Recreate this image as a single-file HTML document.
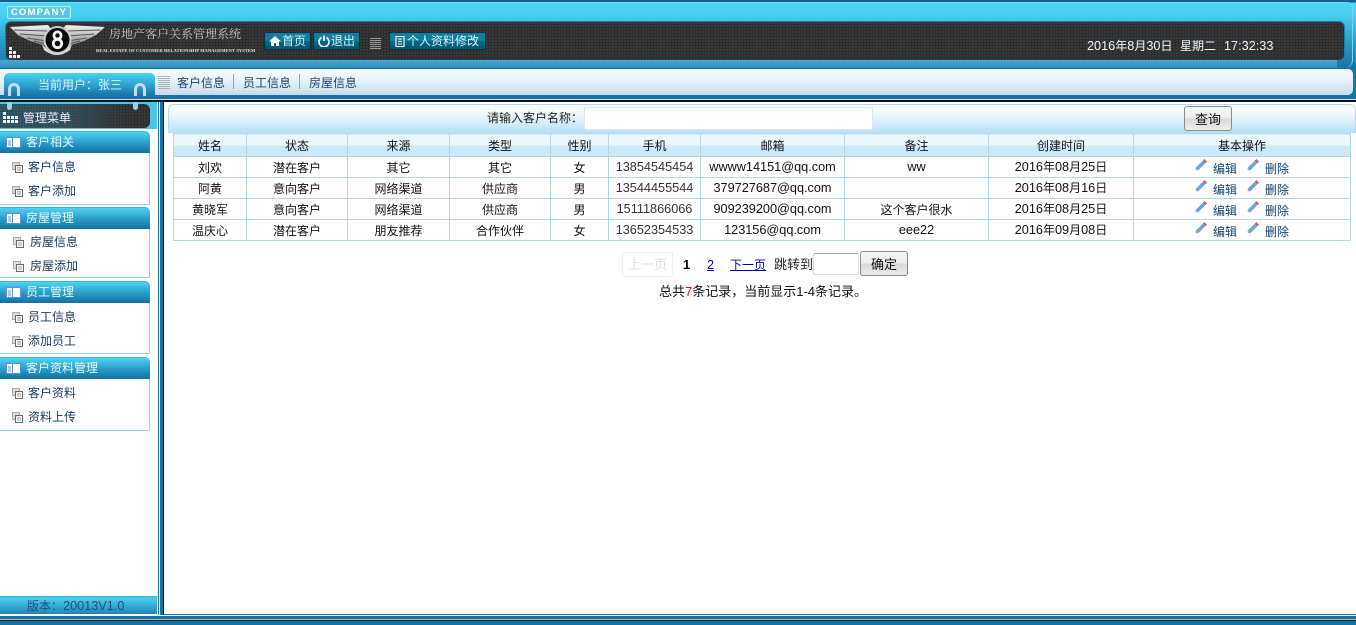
<!DOCTYPE html>
<html lang="zh-CN">
<head>
<meta charset="utf-8">
<title>房地产客户关系管理系统</title>
<style>
*{box-sizing:border-box;margin:0;padding:0}
html,body{width:1356px;height:625px;overflow:hidden;background:#fff}
body{position:relative;font:12px/1.2 "Liberation Sans","Noto Sans CJK SC",sans-serif;color:#111}
.a{position:absolute}
.t{position:absolute;white-space:nowrap;line-height:16px}
.n{font-size:12.7px}
.dots{background-color:#2c2c2c;background-image:radial-gradient(circle at 1px 1px,#3f3f3f .8px,transparent 1px);background-size:3px 3px}
.btn{position:absolute;top:32px;height:18px;border:1px solid #0a2f3d;background:linear-gradient(#0f7da2 0,#0f7da2 50%,#066a84 50%,#05566e 100%);color:#d8f4fb;font-size:12px;line-height:16px;white-space:nowrap}
.lines{position:absolute;background:repeating-linear-gradient(#9a9a9a 0,#9a9a9a 1px,transparent 1px,transparent 2px)}
.gh{position:absolute;left:0;width:150px;height:22px;border-radius:0 5px 0 0;background:linear-gradient(#4dd3f0,#2a9fcb 50%,#12709f);color:#e8fbff;font-size:12px;line-height:21px;padding-left:26px;border-top:1px solid #34b9d8}
.gh svg{position:absolute;left:6px;top:5px}
.gb{position:absolute;left:0;width:150px;background:#fff;border:1px solid #8ed6e6;border-left:0;border-top:0}
.it{position:absolute;color:#173a5e;font-size:12px;line-height:16px;white-space:nowrap}
.ic{position:absolute}
table{position:absolute;left:173px;top:133px;width:1177px;height:107px;border-collapse:collapse;table-layout:fixed;background:#fff}
th,td{border:1px solid #b2d8e8;text-align:center;font-weight:normal;font-size:12px;color:#111;padding:2px 0 0;white-space:nowrap;overflow:hidden}
th{height:23px;background:linear-gradient(#e9f7fe 0,#e9f7fe 50%,#cbe9f9 50%,#cbe9f9 100%)}
td{height:21px}
td.o{padding:0}
.ops{position:relative;display:block;height:20px;width:100%}
.ops svg{position:absolute;top:2px}
.ops span{position:absolute;top:4px;color:#12406f;line-height:16px}
.gbtn{position:absolute;border:1px solid #8b8b8b;border-radius:3px;background:linear-gradient(#f6f6f6 0,#ededed 50%,#d8d8d8 51%,#ececec 100%);color:#111;text-align:center;font-size:13px}
</style>
</head>
<body>

<!-- Header -->
<div class="a" style="left:0;top:0;width:1356px;height:68px;background:linear-gradient(#14608f 0,#14608f 2px,#4bd6f5 3px,#47d2f1 14px,#2a9fcb 40px,#1673a6 68px)"></div>
<div class="a" style="left:0;top:2px;width:1353px;height:66px;border:1px solid #7fd4ec;border-left:0;border-radius:0 6px 8px 0;border-bottom:0"></div>
<div class="a" style="left:7px;top:6px;width:64px;height:13px;border:1px solid #b8edf8;border-radius:2px;background:#55c8e8;color:#fff;font:bold 9.500px/11px 'Liberation Sans',sans-serif;letter-spacing:1.200px;text-align:center">COMPANY</div>
<div class="a dots" style="left:6px;top:22px;width:1338px;height:38px;border-radius:5px;box-shadow:0 0 0 1px #1b7fb0"></div>
<div class="a" style="left:0;top:60px;width:1337px;height:8px;background:linear-gradient(#4aa9d0,#2e8dbd)"></div>

<svg class="a" style="left:8px;top:22px" width="100" height="36" viewBox="8 22 100 36">
<defs><linearGradient id="w" x1="0" y1="0" x2="0" y2="1"><stop offset="0" stop-color="#f4f4f4"/><stop offset="1" stop-color="#888"/></linearGradient></defs>
<path d="M10 27 L48 25 L52 30 L46 46 L30 41 L18 35Z" fill="url(#w)"/>
<path d="M105 27 L66 25 L62 30 L68 46 L84 41 L96 35Z" fill="url(#w)"/>
<path d="M14 30 L48 31M20 34 L47 36M27 38 L47 41M34 41 L46 44M100 30 L66 31M94 34 L67 36M87 38 L67 41M80 41 L68 44" stroke="#555" stroke-width="1" fill="none"/>
<path d="M42 44 Q57 62 72 44 L70 50 Q57 60 44 50Z" fill="#ddd"/>
<circle cx="57.500" cy="40" r="14" fill="#ccc"/>
<circle cx="57.500" cy="40" r="12" fill="#0a0a0a"/>
<circle cx="57.500" cy="35.500" r="3.600" fill="none" stroke="#f4f4f4" stroke-width="2.800"/>
<circle cx="57.500" cy="43.500" r="4.200" fill="none" stroke="#f4f4f4" stroke-width="2.800"/>
<rect x="9" y="47" width="3" height="3" fill="#eee"/><rect x="9" y="51" width="3" height="3" fill="#eee"/><rect x="13" y="51" width="3" height="3" fill="#eee"/><rect x="9" y="55" width="3" height="3" fill="#eee"/><rect x="13" y="55" width="3" height="3" fill="#eee"/><rect x="17" y="55" width="3" height="3" fill="#eee"/>
</svg>

<div class="t" style="left:109px;top:26px;color:#c9c9c9;font-family:'Liberation Serif','Noto Serif CJK SC',serif;font-size:12px">房地产客户关系管理系统</div>
<div class="t" style="left:96px;top:43px;color:#e0e0e0;font-family:'Liberation Serif',serif;font-weight:bold;font-size:4.600px;letter-spacing:.03px">REAL ESTATE OF CUSTOMER RELATIONSHIP MANAGEMENT SYSTEM</div>

<div class="btn" style="left:264px;width:47px;padding-left:17px">首页
<svg class="a" style="left:4px;top:2px" width="12" height="12" viewBox="0 0 12 12"><path d="M6 1 L12 6.500 H10 V11 H7 V8 H5 V11 H2 V6.500 H0Z" fill="#fff"/></svg></div>
<div class="btn" style="left:313px;width:47px;padding-left:17px">退出
<svg class="a" style="left:4px;top:2px" width="12" height="12" viewBox="0 0 12 12"><path d="M3.500 2.500 A5 5 0 1 0 8.500 2.500 M6 0.500 V6" fill="none" stroke="#fff" stroke-width="1.600"/></svg></div>
<div class="lines" style="left:370px;top:38px;width:11px;height:11px"></div>
<div class="btn" style="left:389px;width:97px;padding-left:17px">个人资料修改
<svg class="a" style="left:5px;top:3px" width="10" height="11" viewBox="0 0 10 11"><path d="M1 .500H9V10.500H1Z M3 3H7M3 5.500H7M3 8H7" fill="none" stroke="#fff" stroke-width="1.100"/></svg></div>

<div class="t" style="left:1087px;top:38px;color:#f2f8ff"><span class="n">2016</span>年<span class="n">8</span>月<span class="n">30</span>日</div>
<div class="t" style="left:1180px;top:38px;color:#f2f8ff">星期二</div>
<div class="t" style="left:1224px;top:38px;color:#f2f8ff"><span class="n">17:32:33</span></div>

<!-- Nav bar -->
<div class="a" style="left:0;top:68px;width:1356px;height:27px;background:#1673a6"></div>
<div class="a" style="left:0;top:69px;width:1353px;height:26px;border-radius:0 5px 5px 0;background:linear-gradient(#f6fbff,#e6f2fa 45%,#c9dbe8)"></div>
<div class="a" style="left:0;top:95px;width:1356px;height:4px;background:#1673a6"></div>
<div class="a" style="left:0;top:99px;width:1356px;height:1px;background:#cfe0ea"></div>
<div class="a" style="left:0;top:100px;width:1356px;height:2px;background:#111"></div>
<div class="a" style="left:4px;top:73px;width:151px;height:23px;border-radius:5px 5px 0 0;background:linear-gradient(#4ad2f0,#2a9acb 60%,#1673a6)"></div>
<div class="a" style="left:8px;top:83px;width:12px;height:13px;border:3px solid #c8dbe8;border-bottom:0;border-radius:6px 6px 0 0"></div>
<div class="a" style="left:134px;top:83px;width:12px;height:13px;border:3px solid #c8dbe8;border-bottom:0;border-radius:6px 6px 0 0"></div>
<div class="t" style="left:38px;top:77px;color:#dcf6ff">当前用户：张三</div>
<div class="lines" style="left:158px;top:76px;width:12px;height:13px;opacity:.75"></div>
<div class="t" style="left:177px;top:75px;color:#1e4468">客户信息</div>
<div class="a" style="left:233px;top:74px;width:1px;height:15px;background:#8aa2b4"></div>
<div class="t" style="left:243px;top:75px;color:#1e4468">员工信息</div>
<div class="a" style="left:299px;top:74px;width:1px;height:15px;background:#8aa2b4"></div>
<div class="t" style="left:309px;top:75px;color:#1e4468">房屋信息</div>

<!-- Sidebar -->
<div class="a" style="left:0;top:102px;width:157px;height:27px;background:#4cc5e8"></div>
<div class="a dots" style="left:0;top:104px;width:150px;height:24px;border-radius:0 6px 6px 0;background-image:radial-gradient(circle at 1px 1px,#3f3f3f .8px,transparent 1px),linear-gradient(90deg,#2b5f74,#2d5668 45%,rgba(45,45,45,0) 85%);background-size:3px 3px,100% 100%"></div>
<div class="a" style="left:7px;top:102px;width:5px;height:8px;border-radius:0 0 3px 3px;background:#9cd0ea"></div>
<div class="a" style="left:133px;top:102px;width:5px;height:8px;border-radius:0 0 3px 3px;background:#9cd0ea"></div>
<svg class="a" style="left:3px;top:112px" width="16" height="12"><path d="M0 0h3v3H0zM0 4h3v3H0zM4 4h3v3H4zM8 4h3v3H8zM12 4h3v3h-3zM0 8h3v3H0zM4 8h3v3H4zM8 8h3v3H8zM12 8h3v3h-3z" fill="#f2f2f2"/></svg>
<div class="t" style="left:23px;top:110px;color:#eef">管理菜单</div>

<div class="gh" style="top:131px">客户相关<svg width="15" height="11" viewBox="0 0 15 11"><path d="M0 0H15V11H0Z" fill="#fff"/><path d="M.5.500H14.500V10.500H.5Z" fill="none" stroke="#5b8fd8"/><path d="M6.500 1V10.500M2 4H5M2 6H5M2 8H5" stroke="#5b8fd8" fill="none"/></svg></div>
<div class="gb" style="top:153px;height:52px"></div>
<div class="gh" style="top:207px">房屋管理<svg width="15" height="11" viewBox="0 0 15 11"><path d="M0 0H15V11H0Z" fill="#fff"/><path d="M.5.500H14.500V10.500H.5Z" fill="none" stroke="#5b8fd8"/><path d="M6.500 1V10.500M2 4H5M2 6H5M2 8H5" stroke="#5b8fd8" fill="none"/></svg></div>
<div class="gb" style="top:229px;height:49px"></div>
<div class="gh" style="top:281px">员工管理<svg width="15" height="11" viewBox="0 0 15 11"><path d="M0 0H15V11H0Z" fill="#fff"/><path d="M.5.500H14.500V10.500H.5Z" fill="none" stroke="#5b8fd8"/><path d="M6.500 1V10.500M2 4H5M2 6H5M2 8H5" stroke="#5b8fd8" fill="none"/></svg></div>
<div class="gb" style="top:303px;height:51px"></div>
<div class="gh" style="top:357px">客户资料管理<svg width="15" height="11" viewBox="0 0 15 11"><path d="M0 0H15V11H0Z" fill="#fff"/><path d="M.5.500H14.500V10.500H.5Z" fill="none" stroke="#5b8fd8"/><path d="M6.500 1V10.500M2 4H5M2 6H5M2 8H5" stroke="#5b8fd8" fill="none"/></svg></div>
<div class="gb" style="top:379px;height:52px"></div>

<svg class="ic" style="left:12px;top:162px" width="11" height="11"><path d="M.5.500h7v7h-7z" fill="#ddd" stroke="#aaa"/><path d="M3.500 3.500h7v7h-7z" fill="#fff" stroke="#666"/><path d="M5 6h4M5 8h4" stroke="#999"/></svg><div class="it" style="left:28px;top:159px">客户信息</div>
<svg class="ic" style="left:12px;top:186px" width="11" height="11"><path d="M.5.500h7v7h-7z" fill="#ddd" stroke="#aaa"/><path d="M3.500 3.500h7v7h-7z" fill="#fff" stroke="#666"/><path d="M5 6h4M5 8h4" stroke="#999"/></svg><div class="it" style="left:28px;top:183px">客户添加</div>
<svg class="ic" style="left:13px;top:237px" width="11" height="11"><path d="M.5.500h7v7h-7z" fill="#ddd" stroke="#aaa"/><path d="M3.500 3.500h7v7h-7z" fill="#fff" stroke="#666"/><path d="M5 6h4M5 8h4" stroke="#999"/></svg><div class="it" style="left:30px;top:234px">房屋信息</div>
<svg class="ic" style="left:13px;top:261px" width="11" height="11"><path d="M.5.500h7v7h-7z" fill="#ddd" stroke="#aaa"/><path d="M3.500 3.500h7v7h-7z" fill="#fff" stroke="#666"/><path d="M5 6h4M5 8h4" stroke="#999"/></svg><div class="it" style="left:30px;top:258px">房屋添加</div>
<svg class="ic" style="left:12px;top:312px" width="11" height="11"><path d="M.5.500h7v7h-7z" fill="#ddd" stroke="#aaa"/><path d="M3.500 3.500h7v7h-7z" fill="#fff" stroke="#666"/><path d="M5 6h4M5 8h4" stroke="#999"/></svg><div class="it" style="left:28px;top:309px">员工信息</div>
<svg class="ic" style="left:12px;top:336px" width="11" height="11"><path d="M.5.500h7v7h-7z" fill="#ddd" stroke="#aaa"/><path d="M3.500 3.500h7v7h-7z" fill="#fff" stroke="#666"/><path d="M5 6h4M5 8h4" stroke="#999"/></svg><div class="it" style="left:28px;top:333px">添加员工</div>
<svg class="ic" style="left:12px;top:388px" width="11" height="11"><path d="M.5.500h7v7h-7z" fill="#ddd" stroke="#aaa"/><path d="M3.500 3.500h7v7h-7z" fill="#fff" stroke="#666"/><path d="M5 6h4M5 8h4" stroke="#999"/></svg><div class="it" style="left:28px;top:385px">客户资料</div>
<svg class="ic" style="left:12px;top:412px" width="11" height="11"><path d="M.5.500h7v7h-7z" fill="#ddd" stroke="#aaa"/><path d="M3.500 3.500h7v7h-7z" fill="#fff" stroke="#666"/><path d="M5 6h4M5 8h4" stroke="#999"/></svg><div class="it" style="left:28px;top:409px">资料上传</div>

<div class="a" style="left:0;top:596px;width:157px;height:18px;background:linear-gradient(#2fb0cc 0,#4ccfee 2px,#1f86b5)"></div>
<div class="t" style="left:27px;top:598px;color:#1c4f7c">版本：<span class="n">20013V1.0</span></div>

<!-- Splitter -->
<div class="a" style="left:158px;top:102px;width:1px;height:513px;background:#1673a6"></div>
<div class="a" style="left:160px;top:102px;width:3px;height:513px;background:#1673a6"></div>
<div class="a" style="left:163px;top:102px;width:1px;height:513px;background:#111"></div>

<!-- Bottom bars -->
<div class="a" style="left:164px;top:614px;width:1192px;height:1px;background:#1673a6"></div>
<div class="a" style="left:0;top:616px;width:1356px;height:3px;background:#1673a6"></div>
<div class="a" style="left:0;top:619px;width:1356px;height:1px;background:#bbb"></div>
<div class="a" style="left:0;top:620px;width:1356px;height:1px;background:#222"></div>
<div class="a" style="left:0;top:621px;width:1356px;height:4px;background:#1673a6"></div>

<!-- Search bar -->
<div class="a" style="left:168px;top:104px;width:1188px;height:29px;border:1px solid #a9dbf3;border-bottom:0;border-radius:6px 6px 0 0;background:linear-gradient(#fff,#e8f5fd 40%,#b5e0f6)"></div>
<div class="t" style="left:487px;top:110px;color:#222">请输入客户名称：</div>
<div class="a" style="left:584px;top:107px;width:289px;height:23px;background:#fff;border:1px solid #d9e6ee;border-radius:2px"></div>
<div class="gbtn" style="left:1184px;top:106px;width:48px;height:25px;line-height:25px">查询</div>

<!-- Table -->
<table>
<colgroup><col style="width:73px"><col style="width:101px"><col style="width:102px"><col style="width:101px"><col style="width:58px"><col style="width:92px"><col style="width:144px"><col style="width:144px"><col style="width:145px"><col style="width:217px"></colgroup>
<tr><th>姓名</th><th>状态</th><th>来源</th><th>类型</th><th>性别</th><th>手机</th><th>邮箱</th><th>备注</th><th>创建时间</th><th>基本操作</th></tr>
<tr><td>刘欢</td><td>潜在客户</td><td>其它</td><td>其它</td><td>女</td><td><span class="n" style="color:#333">13854545454</span></td><td><span class="n">wwww14151@qq.com</span></td><td><span class="n">ww</span></td><td><span class="n">2016</span>年<span class="n">08</span>月<span class="n">25</span>日</td>
<td class="o"><span class="ops"><svg style="left:61px" width="12" height="12" viewBox="0 0 14 14"><path d="M1 10 L9 2 L12 5 L4 13 L1 13Z" fill="#6aa5dc"/><path d="M9 2 L11 0 L14 3 L12 5Z" fill="#e0535f"/><path d="M1 10 L4 13 L1 13Z" fill="#aaa"/></svg><span style="left:79px">编辑</span><svg style="left:113px" width="12" height="12" viewBox="0 0 14 14"><path d="M1 10 L9 2 L12 5 L4 13 L1 13Z" fill="#6aa5dc"/><path d="M9 2 L11 0 L14 3 L12 5Z" fill="#e0535f"/><path d="M1 10 L4 13 L1 13Z" fill="#aaa"/></svg><span style="left:131px">删除</span></span></td></tr>
<tr><td>阿黄</td><td>意向客户</td><td>网络渠道</td><td>供应商</td><td>男</td><td><span class="n" style="color:#333">13544455544</span></td><td><span class="n">379727687@qq.com</span></td><td></td><td><span class="n">2016</span>年<span class="n">08</span>月<span class="n">16</span>日</td>
<td class="o"><span class="ops"><svg style="left:61px" width="12" height="12" viewBox="0 0 14 14"><path d="M1 10 L9 2 L12 5 L4 13 L1 13Z" fill="#6aa5dc"/><path d="M9 2 L11 0 L14 3 L12 5Z" fill="#e0535f"/><path d="M1 10 L4 13 L1 13Z" fill="#aaa"/></svg><span style="left:79px">编辑</span><svg style="left:113px" width="12" height="12" viewBox="0 0 14 14"><path d="M1 10 L9 2 L12 5 L4 13 L1 13Z" fill="#6aa5dc"/><path d="M9 2 L11 0 L14 3 L12 5Z" fill="#e0535f"/><path d="M1 10 L4 13 L1 13Z" fill="#aaa"/></svg><span style="left:131px">删除</span></span></td></tr>
<tr><td>黄晓军</td><td>意向客户</td><td>网络渠道</td><td>供应商</td><td>男</td><td><span class="n" style="color:#333">15111866066</span></td><td><span class="n">909239200@qq.com</span></td><td>这个客户很水</td><td><span class="n">2016</span>年<span class="n">08</span>月<span class="n">25</span>日</td>
<td class="o"><span class="ops"><svg style="left:61px" width="12" height="12" viewBox="0 0 14 14"><path d="M1 10 L9 2 L12 5 L4 13 L1 13Z" fill="#6aa5dc"/><path d="M9 2 L11 0 L14 3 L12 5Z" fill="#e0535f"/><path d="M1 10 L4 13 L1 13Z" fill="#aaa"/></svg><span style="left:79px">编辑</span><svg style="left:113px" width="12" height="12" viewBox="0 0 14 14"><path d="M1 10 L9 2 L12 5 L4 13 L1 13Z" fill="#6aa5dc"/><path d="M9 2 L11 0 L14 3 L12 5Z" fill="#e0535f"/><path d="M1 10 L4 13 L1 13Z" fill="#aaa"/></svg><span style="left:131px">删除</span></span></td></tr>
<tr><td>温庆心</td><td>潜在客户</td><td>朋友推荐</td><td>合作伙伴</td><td>女</td><td><span class="n" style="color:#333">13652354533</span></td><td><span class="n">123156@qq.com</span></td><td><span class="n">eee22</span></td><td><span class="n">2016</span>年<span class="n">09</span>月<span class="n">08</span>日</td>
<td class="o"><span class="ops"><svg style="left:61px" width="12" height="12" viewBox="0 0 14 14"><path d="M1 10 L9 2 L12 5 L4 13 L1 13Z" fill="#6aa5dc"/><path d="M9 2 L11 0 L14 3 L12 5Z" fill="#e0535f"/><path d="M1 10 L4 13 L1 13Z" fill="#aaa"/></svg><span style="left:79px">编辑</span><svg style="left:113px" width="12" height="12" viewBox="0 0 14 14"><path d="M1 10 L9 2 L12 5 L4 13 L1 13Z" fill="#6aa5dc"/><path d="M9 2 L11 0 L14 3 L12 5Z" fill="#e0535f"/><path d="M1 10 L4 13 L1 13Z" fill="#aaa"/></svg><span style="left:131px">删除</span></span></td></tr>
</table>

<!-- Pagination -->
<div class="a" style="left:622px;top:252px;width:51px;height:25px;border:1px solid #eee;color:#ddd;text-align:center;line-height:24px;font-size:13px">上一页</div>
<div class="t" style="left:683px;top:257px;font-weight:bold;font-size:13px;color:#000">1</div>
<div class="t" style="left:707px;top:257px;color:#00a;text-decoration:underline;font-size:12.700px">2</div>
<div class="t" style="left:730px;top:257px;color:#00a;text-decoration:underline">下一页</div>
<div class="t" style="left:774px;top:257px;font-size:13px;color:#222">跳转到</div>
<div class="a" style="left:813px;top:253px;width:46px;height:22px;border:1px solid #d4dfe8;border-top-color:#aaa;border-radius:2px;background:#fff"></div>
<div class="gbtn" style="left:860px;top:251px;width:48px;height:25px;line-height:25px">确定</div>
<div class="t" style="left:659px;top:284px;font-size:13px;color:#111">总共<span style="color:#f00">7</span>条记录，当前显示1-4条记录。</div>

</body>
</html>
